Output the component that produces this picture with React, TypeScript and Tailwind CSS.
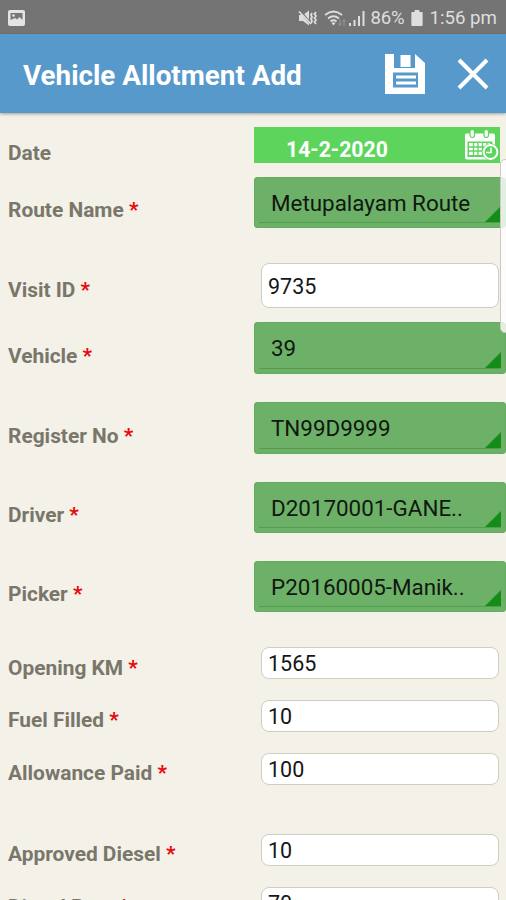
import clsx from "clsx";

type Field = {
  label: string;
  value: string;
  kind: "select" | "input";
  // spacing above the row, height of the control, offset of the label
  row: string;
  labelClass: string;
};

const fields: Field[] = [
  { label: "Route Name", value: "Metupalayam Route", kind: "select", row: "mt-3.5 h-[51px]", labelClass: "pt-[21px]" },
  { label: "Visit ID", value: "9735", kind: "input", row: "mt-[35px] h-[45px]", labelClass: "pt-[15px]" },
  { label: "Vehicle", value: "39", kind: "select", row: "mt-3.5 h-[52px]", labelClass: "pt-[22px]" },
  { label: "Register No", value: "TN99D9999", kind: "select", row: "mt-7 h-[52px]", labelClass: "pt-[22px]" },
  { label: "Driver", value: "D20170001-GANE..", kind: "select", row: "mt-7 h-[51px]", labelClass: "pt-[21px]" },
  { label: "Picker", value: "P20160005-Manik..", kind: "select", row: "mt-7 h-[51px]", labelClass: "pt-[21px]" },
  { label: "Opening KM", value: "1565", kind: "input", row: "mt-[35px] h-8", labelClass: "pt-[9px]" },
  { label: "Fuel Filled", value: "10", kind: "input", row: "mt-[21px] h-8", labelClass: "pt-2" },
  { label: "Allowance Paid", value: "100", kind: "input", row: "mt-[21px] h-8", labelClass: "pt-2" },
  { label: "Approved Diesel", value: "10", kind: "input", row: "mt-[49px] h-8", labelClass: "pt-2" },
  { label: "Diesel Rate", value: "70", kind: "input", row: "mt-[21px] h-8", labelClass: "pt-2" },
];

function StatusBar() {
  return (
    <div className="flex h-[34px] items-center bg-[#747474] pt-0.5 pr-[9px] pl-2 text-[#dedede]">
      <svg className="h-4 w-[17px]" viewBox="0 0 17 16">
        <rect width="17" height="16" rx="2" fill="#e4e4e4" />
        <path d="M2.5 3h12v7l-3-3-2.5 2.5L7 8l-4.5 2z" fill="#777" />
        <circle cx="5.5" cy="5.5" r="1.3" fill="#e4e4e4" />
      </svg>
      <div className="ml-auto flex items-center">
        <svg className="h-[18px] w-[20px]" viewBox="0 0 20 18">
          <path d="M1 6h4l6-4.500v15L5 12H1z" fill="#dedede" />
          <path d="M2 2l11 13" stroke="#747474" strokeWidth="2.500" />
          <path d="M1 2.500l12 12.500" stroke="#dedede" strokeWidth="1.800" />
          <path d="M14 4l-1 2 1 2-1 2 1 2-1 2M18 3l-1.500 2 1.500 2-1.500 2 1.500 2-1.500 2 1.500 2" fill="none" stroke="#dedede" strokeWidth="1.800" />
        </svg>
        <svg className="ml-1.5 h-[18px] w-[23px]" viewBox="0 0 23 18" fill="none" stroke="#dedede" strokeWidth="1.700">
          <path d="M1 6q8.500-7 17 0M4 9.500q5.500-4.500 11 0M6.500 12.500q3-2.500 6 0" />
          <path d="M9.500 16.500l-2-2.500q2-1.500 4 0z" fill="#dedede" stroke="none" />
          <path d="M16 10v6M14.500 14.500l1.500 2 1.500-2M20 17v-6M18.500 12.500l1.500-2 1.500 2" stroke="#909090" strokeWidth="1.200" />
        </svg>
        <svg className="ml-px h-4 w-[18px]" viewBox="0 0 18 16" fill="#dedede">
          <path d="M1 13h2v3H1zM5.500 10h2v6h-2zM10 6h2v10h-2zM14.500 1h2v15h-2z" />
        </svg>
        <span className="ml-1 w-[35px] text-[18.6px] leading-6 tracking-[-0.2px]">86%</span>
        <svg className="ml-1.5 h-4 w-3" viewBox="0 0 12 17" fill="#dedede">
          <path d="M3.500 0h5v2H11q1 0 1 1v13q0 1-1 1H1q-1 0-1-1V3q0-1 1-1h2.500z" />
        </svg>
        <span className="ml-1.5 text-[18.7px] leading-6">1:56 pm</span>
      </div>
    </div>
  );
}

function Header() {
  return (
    <header className="relative flex h-[79px] items-center bg-[#5899cc] pr-[17px] pl-[23px] text-white shadow-[0_1px_3px_rgba(0,0,0,0.35)]">
      <h1 className="pt-1 text-[27.8px] leading-9 font-bold whitespace-nowrap">Vehicle Allotment Add</h1>
      <svg className="ml-auto h-10 w-10" viewBox="0 0 40 40">
        <path d="M0 0h9v14h21V0l10 9v31H0z" fill="#fff" />
        <path d="M15.500 1h10v12h-10z" fill="#fff" />
        <path d="M8 18.500h25v15H8z" fill="#5899cc" />
        <path d="M11 23h20M11 29h20" stroke="#fff" strokeWidth="3" />
      </svg>
      <svg className="ml-8 h-8 w-8" viewBox="0 0 32 32">
        <path d="M2 2l28 28M30 2L2 30" stroke="#fff" strokeWidth="4" />
      </svg>
    </header>
  );
}

function CalendarClock() {
  return (
    <svg className="mr-px h-8 w-[35px]" viewBox="0 0 35 31">
      <path d="M2 4h27q2 0 2 2v22q0 2-2 2H3q-2 0-2-2V6q0-2 1-2z" fill="#fff" />
      <path d="M3.500 12h25v15.500h-25z" fill="#5dd55d" />
      <path d="M5 13.500h21v12H5z" fill="#fff" />
      <path d="M5 17.500h21M5 21.500h21M9.500 13v13M14 13v13M18.500 13v13M23 13v13" stroke="#5dd55d" strokeWidth="1.300" />
      <rect x="6" y="0" width="4.500" height="8" rx="2.200" fill="#fff" stroke="#5dd55d" strokeWidth="1.200" />
      <rect x="20" y="0" width="4.500" height="8" rx="2.200" fill="#fff" stroke="#5dd55d" strokeWidth="1.200" />
      <circle cx="26.500" cy="22.500" r="8.500" fill="#5dd55d" />
      <circle cx="26.500" cy="22.500" r="6.900" fill="#5dd55d" stroke="#fff" strokeWidth="2" />
      <path d="M27 18v5h-5" fill="none" stroke="#fff" strokeWidth="1.600" />
    </svg>
  );
}

function Label({ text, required, className }: { text: string; required?: boolean; className: string }) {
  return (
    <div className={clsx("w-[254px] shrink-0 pl-2 text-[20.9px] leading-6 font-bold text-[#79776a]", className)}>
      {text}
      {required && <span className="text-[#e60a0a]"> *</span>}
    </div>
  );
}

function Select({ value }: { value: string }) {
  return (
    <div className="flex flex-1 rounded-[3px] border border-[#64ad60] bg-[#6db168] pr-1 pb-1 pl-1">
      <div className="flex flex-1 items-end border-b border-[#4f9f4f]">
        <span className="flex-1 self-start pt-[11px] pl-3 text-[22.4px] leading-7 whitespace-nowrap text-[#101810]">
          {value}
        </span>
        <svg className="-ml-4 h-4 w-4 shrink-0" viewBox="0 0 16 16">
          <path d="M16 0v16H0z" fill="#168c18" />
        </svg>
      </div>
    </div>
  );
}

function Input({ value }: { value: string }) {
  return (
    <div className="mr-[7px] ml-[7px] flex flex-1 items-center rounded-lg border-[1.5px] border-[#cfcec2] bg-white pt-0.5 pl-1.5 text-[21.5px] leading-none text-[#161616]">
      {value}
    </div>
  );
}

export default function App() {
  return (
    <div className="relative h-[900px] w-[506px] overflow-hidden bg-[#f4f1e9] font-[Roboto,sans-serif]">
      <StatusBar />
      <Header />
      <main>
        <div className="mt-3.5 flex h-9">
          <Label text="Date" className="pt-3.5" />
          <div className="mr-1.5 flex flex-1 items-center bg-[#5dd55d] text-white">
            <span className="flex-1 pt-2.5 pl-8 text-[21.2px] leading-8 font-bold">14-2-2020</span>
            <CalendarClock />
          </div>
        </div>
        {fields.map((field) => (
          <div key={field.label} className={clsx("flex", field.row)}>
            <Label text={field.label} required className={field.labelClass} />
            {field.kind === "select" ? <Select value={field.value} /> : <Input value={field.value} />}
          </div>
        ))}
      </main>
      <div className="absolute top-[159px] -right-1 h-[174px] w-[10px] rounded-md border border-[#c9c9c9] bg-white/80" />
    </div>
  );
}
